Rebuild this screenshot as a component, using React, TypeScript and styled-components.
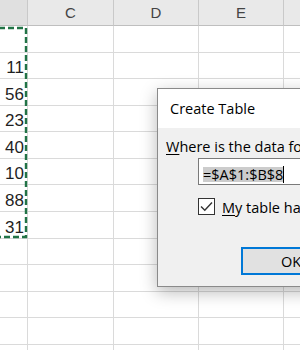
import React from "react";
import styled, { createGlobalStyle } from "styled-components";

const GlobalStyle = createGlobalStyle`
  html, body { margin: 0; padding: 0; background: #ffffff; }
  body { width: 300px; height: 350px; overflow: hidden; }
`;

const Page = styled.div`
  position: relative;
  width: 300px;
  height: 350px;
  overflow: hidden;
  background: #ffffff;
`;

const COLS = "28px 86px 85px 85px 85px";

const Sheet = styled.div`
  width: 369px;
`;

const HeaderRow = styled.div`
  display: grid;
  grid-template-columns: ${COLS};
  height: 26px;
`;

const ColHeader = styled.div<{ $active?: boolean }>`
  box-sizing: border-box;
  display: flex;
  align-items: center;
  justify-content: center;
  background: ${(p) => (p.$active ? "#e0e0e0" : "#e9e9e9")};
  border-right: 1px solid #c9c9c9;
  border-bottom: 1px solid #bfbfbf;
  font-family: "Liberation Sans", Arial, sans-serif;
  font-size: 15px;
  color: #444444;
`;

const Row = styled.div`
  display: grid;
  grid-template-columns: ${COLS};
  height: 26.58px;
`;

const Cell = styled.div`
  box-sizing: border-box;
  display: flex;
  align-items: flex-end;
  justify-content: flex-end;
  padding-right: 3px;
  border-right: 1px solid #dadada;
  border-bottom: 1px solid #dadada;
  font-family: "Liberation Sans", Arial, sans-serif;
  font-size: 17px;
  line-height: 20px;
  color: #1f1f1f;
  overflow: hidden;
`;

const Marquee = styled.svg`
  position: absolute;
  left: 0;
  top: 0;
  pointer-events: none;
`;

const Dialog = styled.div`
  position: absolute;
  left: 157px;
  top: 88px;
  width: 306px;
  box-sizing: border-box;
  border: 1px solid #8a8a8a;
  background: #f0f0f0;
  box-shadow: 0 5px 16px rgba(0, 0, 0, 0.28);
  font-family: "Open Sans", "Noto Sans", sans-serif;
  font-size: 14.5px;
  color: #000000;
`;

const TitleBar = styled.div`
  height: 39px;
  display: flex;
  align-items: center;
  padding-left: 12px;
  background: #ffffff;
  line-height: 20px;
`;

const Body = styled.div`
  padding: 9px 13px 11px 8px;
  display: flex;
  flex-direction: column;
`;

const Label = styled.div`
  line-height: 20px;
  white-space: nowrap;
`;

const Key = styled.span`
  text-decoration: underline;
  text-underline-offset: 2px;
`;

const RangeInput = styled.div`
  margin: 1px 0 0 32px;
  height: 27px;
  box-sizing: border-box;
  border: 1px solid #7a7a7a;
  background: #ffffff;
  display: flex;
  align-items: flex-end;
  padding: 0 0 2px 4px;
`;

const Selected = styled.span`
  display: inline-block;
  height: 15px;
  line-height: 15px;
  background: #cccccc;
  color: #000000;
  white-space: nowrap;
`;

const Caret = styled.span`
  display: inline-block;
  width: 1px;
  height: 17px;
  margin-bottom: -1px;
  background: #000000;
`;

const CheckRow = styled.div`
  margin: 13px 0 0 32px;
  display: flex;
  align-items: flex-start;
  gap: 7px;
`;

const Box = styled.span`
  width: 17px;
  height: 17px;
  box-sizing: border-box;
  border: 1px solid #333333;
  background: #ffffff;
  display: flex;
  align-items: center;
  justify-content: center;
  flex: none;
`;

const Buttons = styled.div`
  margin-top: 29px;
  display: flex;
  justify-content: flex-end;
  gap: 8px;
`;

const Button = styled.button<{ $default?: boolean }>`
  width: 100px;
  height: 28px;
  box-sizing: border-box;
  border: ${(p) => (p.$default ? "2px solid #0078d7" : "1px solid #adadad")};
  background: #e1e1e1;
  font-family: "Open Sans", "Noto Sans", sans-serif;
  font-size: 14.5px;
  color: #000000;
  padding: 0;
  flex: none;
`;

const values = ["", "11", "56", "23", "40", "10", "88", "31", "", "", "", "", ""];

export default function App() {
  return (
    <Page>
      <GlobalStyle />
      <Sheet>
        <HeaderRow>
          <ColHeader $active />
          <ColHeader>C</ColHeader>
          <ColHeader>D</ColHeader>
          <ColHeader>E</ColHeader>
          <ColHeader>F</ColHeader>
        </HeaderRow>
        {values.map((v, i) => (
          <Row key={i}>
            <Cell>{v}</Cell>
            <Cell />
            <Cell />
            <Cell />
            <Cell />
          </Row>
        ))}
      </Sheet>
      <Marquee width="300" height="350" viewBox="0 0 300 350">
        <rect
          x="-10"
          y="28"
          width="36"
          height="209"
          fill="none"
          stroke="#217346"
          strokeWidth="2.4"
          strokeDasharray="6 3"
        />
      </Marquee>
      <Dialog>
        <TitleBar>Create Table</TitleBar>
        <Body>
          <Label>
            <Key>W</Key>here is the data for your table?
          </Label>
          <RangeInput>
            <Selected>=$A$1:$B$8</Selected>
            <Caret />
          </RangeInput>
          <CheckRow>
            <Box>
              <svg width="13" height="11" viewBox="0 0 13 11">
                <path d="M1 5.5 L4.8 9.2 L12 1.5" fill="none" stroke="#333" strokeWidth="1.4" />
              </svg>
            </Box>
            <Label>
              <Key>M</Key>y table has headers
            </Label>
          </CheckRow>
          <Buttons>
            <Button $default>OK</Button>
            <Button>Cancel</Button>
          </Buttons>
        </Body>
      </Dialog>
    </Page>
  );
}
